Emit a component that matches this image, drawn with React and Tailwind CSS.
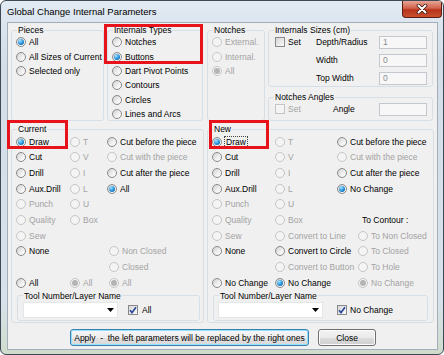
import React from 'react';

const FONT = "font-['Liberation_Sans',Arial,sans-serif]";

const Radio = ({ label, on, dis, focus, className = '' }) => (
  <div className={`flex items-center whitespace-nowrap ${className}`}>
    <span
      className={`w-[10px] h-[10px] shrink-0 rounded-full border flex items-center justify-center ${
        dis
          ? 'border-[#c6c6c6] bg-[#f4f4f4]'
          : 'border-[#8a8a8a] bg-[linear-gradient(135deg,#cfcfcf,#f2f2f2_60%,#ffffff)]'
      }`}
    >
      {on && (
        <span
          className={`w-[6px] h-[6px] rounded-full ${
            dis ? 'bg-[#b4b4b4]' : 'bg-[radial-gradient(circle_at_35%_30%,#a8e4ff,#1f8fdb_55%,#0b4d8a)]'
          }`}
        />
      )}
    </span>
    <span
      className={`${dis ? 'text-[#a3a3a3]' : 'text-black'} ${
        focus ? 'ml-[2px] px-[1px] border border-dotted border-[#444] leading-[10px]' : 'ml-[3px]'
      }`}
    >
      {label}
    </span>
  </div>
);

const Check = ({ on, dis }) => (
  <span
    className={`w-[10px] h-[10px] shrink-0 border flex items-center justify-center ${
      dis ? 'border-[#c6c6c6] bg-[#f4f4f4]' : 'border-[#8a8a8a] bg-[linear-gradient(135deg,#d6d6d6,#fafafa)]'
    }`}
  >
    {on && (
      <svg width="8" height="8" viewBox="0 0 8 8">
        <path d="M1 4.2 L3 6.6 L7 1.2" fill="none" stroke="#2c4a9c" strokeWidth="1.6" />
      </svg>
    )}
  </span>
);

const Field = ({ v }) => (
  <div className="w-[48px] h-[13px] border border-[#c2c8ce] bg-[#f7f7f7] text-[#8d8d8d] pl-[3px] leading-[11px]">
    {v}
  </div>
);

const Combo = ({ className }) => (
  <div className={`h-[16px] bg-white border border-[#e4e7ea] flex items-center justify-end pr-[3px] ${className}`}>
    <svg width="7" height="4" viewBox="0 0 7 4">
      <path d="M0 0h7L3.5 4z" fill="#000" />
    </svg>
  </div>
);

const Group = ({ title, className = '', children }) => (
  <fieldset className={`border border-[#d5dfe5] rounded-[3px] min-w-0 ${className}`}>
    <legend className="ml-[5px] px-[1px] leading-[10px]">{title}</legend>
    {children}
  </fieldset>
);

const r = (label, flags = '') => ({
  label,
  on: flags.includes('on'),
  dis: flags.includes('dis'),
  focus: flags.includes('focus'),
  shift: flags.includes('shift'),
  nudge: flags.includes('nudge'),
  text: flags.includes('text'),
});

const current = [
  [r('Draw', 'on'), r('T', 'dis'), r('Cut before the piece')],
  [r('Cut'), r('V', 'dis'), r('Cut with the piece', 'dis')],
  [r('Drill'), r('I', 'dis'), r('Cut after the piece')],
  [r('Aux.Drill'), r('L', 'dis'), r('All', 'on')],
  [r('Punch', 'dis'), r('U', 'dis'), null],
  [r('Quality', 'dis'), r('Box', 'dis'), null],
  [r('Sew', 'dis'), null, null],
  [r('None'), null, r('Non Closed', 'dis nudge')],
  [null, null, r('Closed', 'dis nudge')],
  [r('All'), r('All', 'dis on'), r('All', 'dis on nudge')],
];

const next = [
  [r('Draw', 'on focus'), r('T', 'dis'), r('Cut before the piece')],
  [r('Cut'), r('V', 'dis'), r('Cut with the piece', 'dis')],
  [r('Drill'), r('I', 'dis'), r('Cut after the piece')],
  [r('Aux.Drill'), r('L', 'dis'), r('No Change', 'on')],
  [r('Punch', 'dis'), r('U', 'dis'), null],
  [r('Quality', 'dis'), r('Box', 'dis'), r('To Contour :', 'text')],
  [r('Sew', 'dis'), r('Convert to Line', 'dis'), r('To Non Closed', 'dis shift')],
  [r('None'), r('Convert to Circle'), r('To Closed', 'dis shift')],
  [null, r('Convert to Button', 'dis'), r('To Hole', 'dis shift')],
  [r('No Change'), r('No Change', 'on'), r('No Change', 'dis on shift')],
];

const Cell = ({ c }) => {
  if (!c) return <div />;
  if (c.text) return <div className="flex items-center ml-[25px] whitespace-nowrap">{c.label}</div>;
  return (
    <Radio
      label={c.label}
      on={c.on}
      dis={c.dis}
      focus={c.focus}
      className={c.shift ? 'ml-[21px]' : c.nudge ? 'ml-[2px]' : ''}
    />
  );
};

const OptionGrid = ({ rows, cols }) => (
  <div className={`grid ${cols} auto-rows-[15.67px] pl-[4px]`}>
    {rows.map((row, i) => row.map((c, j) => <Cell key={`${i}-${j}`} c={c} />))}
  </div>
);

const App = () => {
  return (
    <div className={`relative w-[444px] h-[355px] ${FONT} text-[8.5px] leading-[10px] text-black`}>
      <div className="w-full h-full border border-[#3e4955] rounded-[6px] overflow-hidden bg-[linear-gradient(180deg,#e2eaf2,#d3dee9_60px,#d7e1eb_300px,#cfdccb)] flex flex-col">
        {/* title bar */}
        <div className="h-[21px] flex items-start justify-between shrink-0">
          <div className="pl-[6px] pt-[5px] text-[9.5px] leading-[12px]">Global Change Internal Parameters</div>
          <div className="mr-[1px] w-[40px] h-[17px] rounded-b-[4px] border border-t-0 border-[#5b1d13] bg-[linear-gradient(180deg,#e7a596,#d0624b_45%,#b9331b_55%,#c7502f)] flex items-center justify-center">
            <svg width="12" height="10" viewBox="0 0 12 10">
              <path d="M2.5 1.5 L9.5 8.5 M9.5 1.5 L2.5 8.5" stroke="#3a1710" strokeWidth="3.6" strokeLinecap="round" />
              <path d="M2.5 1.5 L9.5 8.5 M9.5 1.5 L2.5 8.5" stroke="#fff" strokeWidth="2" strokeLinecap="round" />
            </svg>
          </div>
        </div>

        {/* client area */}
        <div className="ml-[6px] w-[431px] h-[328px] border border-[#a2aeba] bg-[#f0f0f0]">
          <div className="pt-[2px] pl-[3px]">
            <div className="flex h-[96px]">
              <Group title="Pieces" className="w-[93px] h-full">
                <div className="grid auto-rows-[14.4px] pl-[4px]">
                  <Radio label="All" on />
                  <Radio label="All Sizes of Current" />
                  <Radio label="Selected only" />
                </div>
              </Group>
              <Group title="Internals Types" className="w-[96px] h-full ml-[3px]">
                <div className="grid auto-rows-[14.4px] pl-[4px]">
                  <Radio label="Notches" />
                  <Radio label="Buttons" on />
                  <Radio label="Dart Pivot Points" />
                  <Radio label="Contours" />
                  <Radio label="Circles" />
                  <Radio label="Lines and Arcs" />
                </div>
              </Group>
              <Group title="Notches" className="w-[58px] h-full ml-[4px]">
                <div className="grid auto-rows-[14.4px] pl-[4px]">
                  <Radio label="External." dis />
                  <Radio label="Internal." dis />
                  <Radio label="All" dis on />
                </div>
              </Group>
              <div className="w-[165px] ml-[3px] flex flex-col justify-between">
                <Group title="Internals Sizes (cm)" className="h-[62px]">
                  <div className="grid grid-cols-[41px_63px_48px] auto-rows-[14px] gap-y-[4px] pl-[6px] items-center">
                    <div className="flex items-center">
                      <Check />
                      <span className="ml-[3px]">Set</span>
                    </div>
                    <span>Depth/Radius</span>
                    <Field v="1" />
                    <div />
                    <span>Width</span>
                    <Field v="0" />
                    <div />
                    <span>Top Width</span>
                    <Field v="0" />
                  </div>
                </Group>
                <Group title="Notches Angles" className="h-[29px]">
                  <div className="grid grid-cols-[41px_63px_48px] auto-rows-[14px] pl-[6px] items-center">
                    <div className="flex items-center">
                      <Check dis />
                      <span className="ml-[3px] text-[#a3a3a3]">Set</span>
                    </div>
                    <span className="pl-[17px]">Angle</span>
                    <Field v="" />
                  </div>
                </Group>
              </div>
            </div>

            <div className="flex h-[199px] mt-[3px]">
              <Group title="Current" className="w-[193px] h-full">
                <OptionGrid rows={current} cols="grid-cols-[54px_37px_1fr]" />
                <Group title="Tool Number/Layer Name" className="ml-[5px] w-[183px] h-[30px]">
                  <div className="flex items-center mt-[1px]">
                    <Combo className="ml-[5px] w-[95px]" />
                    <span className="ml-[10px] flex items-center">
                      <Check on />
                      <span className="ml-[4px]">All</span>
                    </span>
                  </div>
                </Group>
              </Group>
              <Group title="New" className="w-[227px] h-full ml-[3px]">
                <OptionGrid rows={next} cols="grid-cols-[63px_62px_1fr]" />
                <Group title="Tool Number/Layer Name" className="ml-[5px] w-[215px] h-[30px]">
                  <div className="flex items-center mt-[1px]">
                    <Combo className="ml-[4px] w-[105px]" />
                    <span className="ml-[14px] flex items-center">
                      <Check on />
                      <span className="ml-[3px]">No Change</span>
                    </span>
                  </div>
                </Group>
              </Group>
            </div>

            <div className="flex mt-[6px] pl-[59px]">
              <div className="w-[239px] h-[17px] rounded-[3px] border border-[#3c7fb1] shadow-[inset_0_0_0_1px_#92e2fb] bg-[linear-gradient(180deg,#f6f6f6,#eeeeee_50%,#e2e2e2_51%,#d8d8d8)] flex items-center justify-center whitespace-pre">
                Apply  -  the left parameters will be replaced by the right ones
              </div>
              <div className="ml-[9px] w-[58px] h-[17px] rounded-[3px] border border-[#707070] shadow-[inset_0_0_0_1px_#fcfcfc] bg-[linear-gradient(180deg,#f2f2f2,#ebebeb_50%,#dddddd_51%,#cfcfcf)] flex items-center justify-center">
                Close
              </div>
            </div>
          </div>
        </div>
      </div>

      {/* red annotation boxes */}
      <div className="absolute left-[104px] top-[24px] w-[99px] h-[40px] border-[3px] border-[#e8121b]" />
      <div className="absolute left-[7px] top-[120px] w-[61px] h-[29px] border-[3px] border-[#e8121b]" />
      <div className="absolute left-[209px] top-[120px] w-[60px] h-[29px] border-[3px] border-[#e8121b]" />
    </div>
  );
};

export default App;
